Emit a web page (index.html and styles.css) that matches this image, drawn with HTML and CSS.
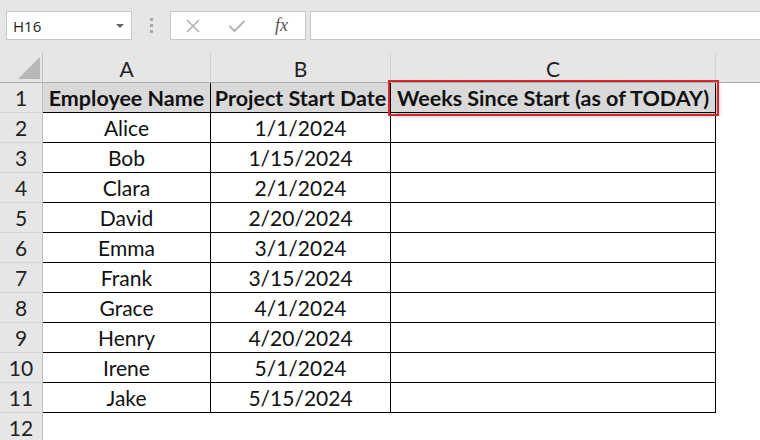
FILE: index.html
```html
<!DOCTYPE html>
<html lang="en">
<head>
  <meta charset="UTF-8" />
  <title>Weeks Since Start</title>
  <link rel="stylesheet" href="styles.css">
</head>
<body>

<!-- Formula bar -->
<div class="topbar">
  <div class="namebox">
    <span>H16</span>
    <span class="caret"></span>
  </div>
  <div class="grip"><i></i><i></i><i></i></div>
  <div class="fx-buttons">
    <svg width="16" height="16" viewBox="0 0 16 16"><path d="M2 2 L14 14 M14 2 L2 14" stroke="#b4b4b4" stroke-width="1.6" fill="none"/></svg>
    <svg width="18" height="14" viewBox="0 0 18 14"><path d="M1.5 7 L6.5 12 L16.5 2" stroke="#b4b4b4" stroke-width="2" fill="none"/></svg>
    <span class="fx">fx</span>
  </div>
  <div class="formula"></div>
</div>

<!-- Sheet -->
<div class="sheet">
  <div class="corner"><span class="tri"></span></div>
  <div class="colhead">A</div>
  <div class="colhead">B</div>
  <div class="colhead">C</div>
  <div class="colhead last"></div>

  <div class="rowhead">1</div>
  <div class="cell head">Employee Name</div>
  <div class="cell head">Project Start Date</div>
  <div class="cell head marked">Weeks Since Start (as of TODAY)</div>
  <div class="blank"></div>

  <div class="rowhead">2</div>
  <div class="cell">Alice</div>
  <div class="cell">1/1/2024</div>
  <div class="cell"></div>
  <div class="blank"></div>

  <div class="rowhead">3</div>
  <div class="cell">Bob</div>
  <div class="cell">1/15/2024</div>
  <div class="cell"></div>
  <div class="blank"></div>

  <div class="rowhead">4</div>
  <div class="cell">Clara</div>
  <div class="cell">2/1/2024</div>
  <div class="cell"></div>
  <div class="blank"></div>

  <div class="rowhead">5</div>
  <div class="cell">David</div>
  <div class="cell">2/20/2024</div>
  <div class="cell"></div>
  <div class="blank"></div>

  <div class="rowhead">6</div>
  <div class="cell">Emma</div>
  <div class="cell">3/1/2024</div>
  <div class="cell"></div>
  <div class="blank"></div>

  <div class="rowhead">7</div>
  <div class="cell">Frank</div>
  <div class="cell">3/15/2024</div>
  <div class="cell"></div>
  <div class="blank"></div>

  <div class="rowhead">8</div>
  <div class="cell">Grace</div>
  <div class="cell">4/1/2024</div>
  <div class="cell"></div>
  <div class="blank"></div>

  <div class="rowhead">9</div>
  <div class="cell">Henry</div>
  <div class="cell">4/20/2024</div>
  <div class="cell"></div>
  <div class="blank"></div>

  <div class="rowhead">10</div>
  <div class="cell">Irene</div>
  <div class="cell">5/1/2024</div>
  <div class="cell"></div>
  <div class="blank"></div>

  <div class="rowhead">11</div>
  <div class="cell">Jake</div>
  <div class="cell">5/15/2024</div>
  <div class="cell"></div>
  <div class="blank"></div>

  <div class="rowhead">12</div>
  <div class="blank"></div>
  <div class="blank"></div>
  <div class="blank"></div>
  <div class="blank"></div>
</div>

</body>
</html>
```

FILE: styles.css
```css
/* Page */
body {
  margin: 0;
  background: #e6e6e6;
  font-family: Lato, 'Open Sans', sans-serif;
  color: #111;
  overflow: hidden;
}

/* Formula bar */
.topbar {
  height: 53px;
  box-sizing: border-box;
  padding: 11px 0 0 6px;
  display: flex;
  align-items: flex-start;
}

.namebox, .fx-buttons, .formula {
  height: 29px;
  box-sizing: border-box;
  background: #fff;
  border: 1px solid #c6c6c6;
}

.namebox {
  width: 126px;
  display: flex;
  align-items: center;
  justify-content: space-between;
  padding: 0 7px 0 6px;
  font-family: 'Open Sans', sans-serif;
  font-size: 15px;
  color: #222;
}

.caret {
  width: 0;
  height: 0;
  border-left: 4px solid transparent;
  border-right: 4px solid transparent;
  border-top: 4px solid #666;
}

.grip {
  width: 38px;
  height: 29px;
  display: flex;
  flex-direction: column;
  align-items: center;
  justify-content: center;
  gap: 3px;
}

.grip i {
  width: 3px;
  height: 3px;
  background: #a8a8a8;
}

.fx-buttons {
  width: 136px;
  display: flex;
  align-items: center;
  padding-left: 14px;
  gap: 27px;
}

.fx {
  font-family: 'Liberation Serif', serif;
  font-style: italic;
  font-size: 18px;
  color: #555;
  margin-left: 2px;
}

.formula {
  flex: 1;
  margin-left: 4px;
  border-right: none;
}

/* Sheet grid */
.sheet {
  display: grid;
  grid-template-columns: 43px 168px 180px 325px 1fr;
  grid-auto-rows: 30px;
  background: #fff;
}

.corner, .colhead, .rowhead {
  background: #e6e6e6;
  box-sizing: border-box;
  display: flex;
  align-items: center;
  justify-content: center;
  font-size: 21px;
  color: #222;
}

.corner {
  border-right: 1px solid #c0c0c0;
  border-bottom: 1px solid #ababab;
  align-items: flex-end;
  justify-content: flex-end;
  padding: 0 2px 3px 0;
}

.tri {
  width: 0;
  height: 0;
  border-left: 22px solid transparent;
  border-bottom: 22px solid #b7b7b7;
}

.colhead {
  border-right: 1px solid #d0d0d0;
  border-bottom: 1px solid #ababab;
  padding-top: 2px;
}

.colhead.last {
  border-right: none;
}

.rowhead {
  border-right: 1px solid #c0c0c0;
  border-bottom: 1px solid #d4d4d4;
}

.cell {
  box-sizing: border-box;
  border-right: 1px solid #000;
  border-bottom: 1px solid #000;
  display: flex;
  align-items: center;
  justify-content: center;
  font-size: 21px;
  white-space: nowrap;
}

.cell.head {
  background: #d9d9d9;
  font-weight: bold;
  font-size: 21.5px;
}

.cell.marked {
  position: relative;
  outline: 2px solid #d8262d;
  outline-offset: 1px;
  box-shadow: 3px 3px 4px rgba(0, 0, 0, 0.25);
}

.blank {
  background: #fff;
}
```
